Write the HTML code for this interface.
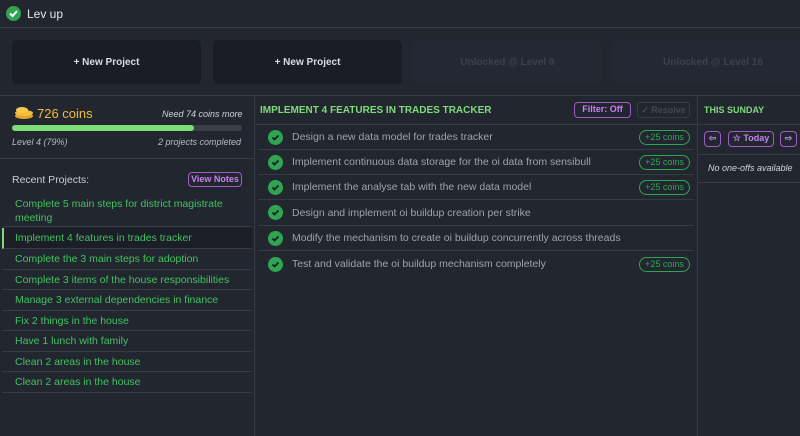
<!DOCTYPE html><html><head><style>
*{box-sizing:border-box;margin:0;padding:0}
body{width:800px;height:436px;overflow:hidden;background:#22262f;font-family:"Liberation Sans",sans-serif;color:#c9ccd3;position:relative}
.a{position:absolute}
.card{position:absolute;top:40px;height:44px;border-radius:5px;background:#1a1d26;color:#d9dbe0;font-weight:bold;font-size:10px;display:flex;align-items:center;justify-content:center}
.card.l{background:#242833;color:#3c414d}
.hl{position:absolute;height:1px;background:#363a45}
.proj{position:absolute;left:2px;width:250px;color:#3fc35e;font-size:10.5px;padding-left:13px;border-bottom:1px solid #363a45;line-height:13.5px}
.task{position:absolute;left:258px;width:436px;height:25px;border-bottom:1px solid #363a45;font-size:10.5px;color:#9ea2ab;display:flex;align-items:center}
.ck{width:15px;height:15px;border-radius:50%;background:#2fa552;margin:0 9px 0 10px;display:flex;align-items:center;justify-content:center}
.coin{position:absolute;right:4px;top:5px;height:15px;width:51px;border:1px solid #2fa552;border-radius:8px;color:#2fa552;font-size:9px;text-align:center;line-height:13px}
.pb{border:1.5px solid #a05bc7;border-radius:4px;color:#c883ee;font-weight:bold;font-size:9px;text-align:center}
</style></head><body>
<div class="a" style="left:6px;top:6px;width:15px;height:15px;border-radius:50%;background:#2fa552"><svg width="15" height="15"><path d="M4 7.5l2.5 2.5 4.5-5" stroke="#fff" stroke-width="2" fill="none"/></svg></div>
<div class="a" style="left:27px;top:7px;font-size:12px;color:#e4e6ea">Lev up</div>
<div class="hl" style="left:0;top:27px;width:800px"></div>
<div class="card" style="left:12px;width:189px">+ New Project</div>
<div class="card" style="left:213px;width:189px">+ New Project</div>
<div class="card l" style="left:413px;width:189px">Unlocked @ Level 9</div>
<div class="card l" style="left:613px;width:200px">Unlocked @ Level 16</div>
<div class="hl" style="left:0;top:95px;width:800px"></div>
<div class="a" style="left:254px;top:96px;width:1px;height:340px;background:#363a45"></div>
<div class="a" style="left:697px;top:96px;width:1px;height:340px;background:#363a45"></div>
<div class="a" style="left:13px;top:106px;width:21px;height:12px"><svg width="22" height="14"><ellipse cx="11" cy="10" rx="9" ry="3" fill="#e0a530"/><ellipse cx="11" cy="7" rx="9" ry="3" fill="#f2bc3c"/><ellipse cx="9" cy="4" rx="6" ry="3" fill="#f7c850"/></svg></div>
<div class="a" style="left:37px;top:106px;font-size:13px;color:#f2bc3c">726 coins</div>
<div class="a" style="left:162px;top:109px;font-size:9px;font-style:italic;color:#d0d2d8">Need 74 coins more</div>
<div class="a" style="left:12px;top:125px;width:230px;height:6px;background:#3a3f4a;border-radius:3px"><div style="width:182px;height:6px;background:#7ddc7a;border-radius:3px"></div></div>
<div class="a" style="left:12px;top:137px;font-size:9px;font-style:italic;color:#b8bbc2">Level 4 (79%)</div>
<div class="a" style="left:158px;top:137px;font-size:9px;font-style:italic;color:#b8bbc2">2 projects completed</div>
<div class="hl" style="left:0;top:158px;width:254px"></div>
<div class="a" style="left:12px;top:174px;font-size:10.5px;color:#c9ccd3">Recent Projects:</div>
<div class="a pb" style="left:188px;top:172px;width:54px;height:15px;line-height:12px">View Notes</div>
<div class="proj" style="top:197px;height:30px;padding-top:1px">Complete 5 main steps for district magistrate meeting</div>
<div class="proj" style="top:228px;height:21px;line-height:20px;background:#1b1e26;border-left:2px solid #7ddc7a;padding-left:11px">Implement 4 features in trades tracker</div>
<div class="proj" style="top:249px;height:20.5px;line-height:20px">Complete the 3 main steps for adoption</div>
<div class="proj" style="top:269.5px;height:20.5px;line-height:20px">Complete 3 items of the house responsibilities</div>
<div class="proj" style="top:290px;height:20.5px;line-height:20px">Manage 3 external dependencies in finance</div>
<div class="proj" style="top:310.5px;height:20.5px;line-height:20px">Fix 2 things in the house</div>
<div class="proj" style="top:331px;height:20.5px;line-height:20px">Have 1 lunch with family</div>
<div class="proj" style="top:351.5px;height:20.5px;line-height:20px">Clean 2 areas in the house</div>
<div class="proj" style="top:372px;height:20.5px;line-height:20px">Clean 2 areas in the house</div>
<div class="a" style="left:260px;top:105px;font-size:10px;font-weight:bold;color:#7ddc7a">IMPLEMENT 4 FEATURES IN TRADES TRACKER</div>
<div class="a pb" style="left:574px;top:102px;width:57px;height:16px;line-height:13px">Filter: Off</div>
<div class="a" style="left:621px;top:102px;left:621px"></div>
<div class="a" style="left:622px;top:102px;width:0"></div>
<div class="a" style="left:622px;top:102px"></div>
<div class="a" style="left:621px;top:102px"></div>
<div class="a" style="left:621px;top:102px"></div>
<div class="a" style="left:621px;top:102px"></div>
<div class="a" style="left:621px;top:102px"></div>
<div class="a" style="left:621px;top:102px"></div>
<div class="a" style="left:637px;top:102px;width:53px;height:16px;border:1px solid #363a45;border-radius:3px;color:#434854;font-size:9px;font-weight:bold;text-align:center;line-height:14px">✓ Resolve</div>
<div class="hl" style="left:255px;top:124px;width:442px"></div>
<div class="task" style="top:125px"><div class="ck"><svg width="9" height="9"><path d="M1.5 4.5l2 2 4-4" stroke="#1a1d26" stroke-width="1.8" fill="none"/></svg></div>Design a new data model for trades tracker<div class="coin">+25 coins</div></div>
<div class="task" style="top:150px"><div class="ck"><svg width="9" height="9"><path d="M1.5 4.5l2 2 4-4" stroke="#1a1d26" stroke-width="1.8" fill="none"/></svg></div>Implement continuous data storage for the oi data from sensibull<div class="coin">+25 coins</div></div>
<div class="task" style="top:175px"><div class="ck"><svg width="9" height="9"><path d="M1.5 4.5l2 2 4-4" stroke="#1a1d26" stroke-width="1.8" fill="none"/></svg></div>Implement the analyse tab with the new data model<div class="coin">+25 coins</div></div>
<div class="task" style="top:200.5px"><div class="ck"><svg width="9" height="9"><path d="M1.5 4.5l2 2 4-4" stroke="#1a1d26" stroke-width="1.8" fill="none"/></svg></div>Design and implement oi buildup creation per strike</div>
<div class="task" style="top:226px"><div class="ck"><svg width="9" height="9"><path d="M1.5 4.5l2 2 4-4" stroke="#1a1d26" stroke-width="1.8" fill="none"/></svg></div>Modify the mechanism to create oi buildup concurrently across threads</div>
<div class="task" style="top:251.5px;border-bottom:none"><div class="ck"><svg width="9" height="9"><path d="M1.5 4.5l2 2 4-4" stroke="#1a1d26" stroke-width="1.8" fill="none"/></svg></div>Test and validate the oi buildup mechanism completely<div class="coin">+25 coins</div></div>
<div class="a" style="left:704px;top:105px;font-size:9px;font-weight:bold;color:#7ddc7a">THIS SUNDAY</div>
<div class="hl" style="left:698px;top:124px;width:102px"></div>
<div class="a pb" style="left:704px;top:131px;width:17px;height:16px;line-height:13px">⇦</div>
<div class="a pb" style="left:728px;top:131px;width:46px;height:16px;line-height:13px">☆ Today</div>
<div class="a pb" style="left:780px;top:131px;width:17px;height:16px;line-height:13px">⇨</div>
<div class="hl" style="left:698px;top:154px;width:102px"></div>
<div class="a" style="left:708px;top:163px;font-size:9px;font-style:italic;color:#d0d2d8">No one-offs available</div>
<div class="hl" style="left:698px;top:182px;width:102px"></div>
</body></html>
